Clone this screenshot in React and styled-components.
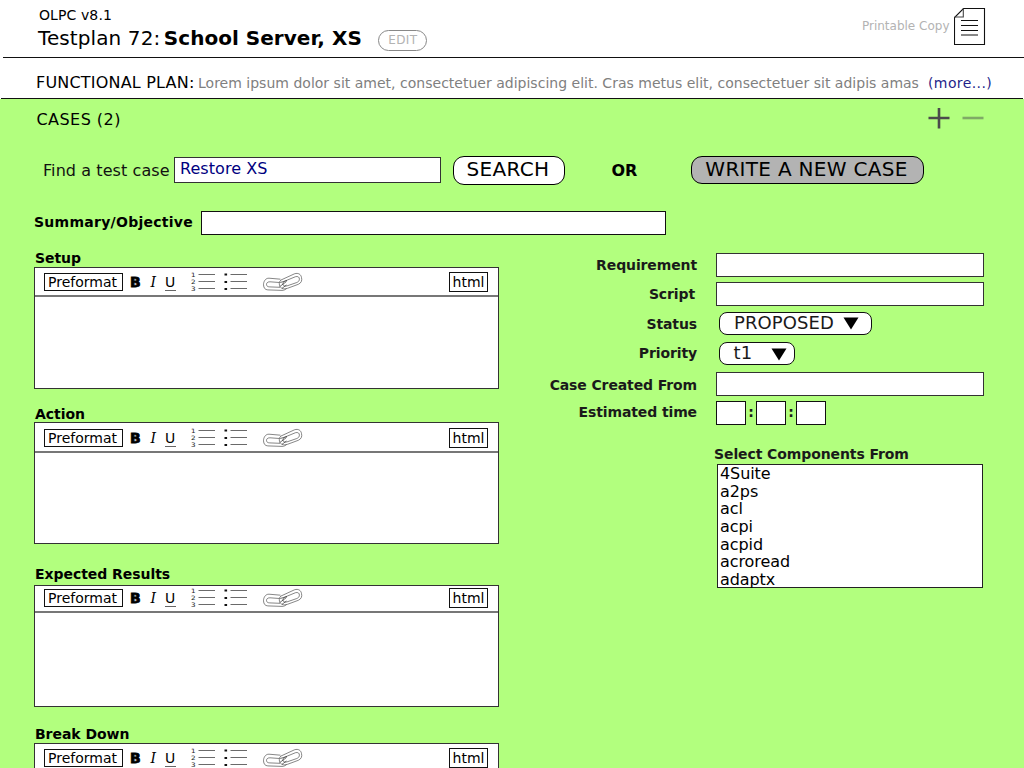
import React from "react";
import styled, { createGlobalStyle } from "styled-components";

const Global = createGlobalStyle`
  * { box-sizing: border-box; }
  html, body { margin: 0; padding: 0; background: #fff; }
  body { width: 1024px; height: 768px; overflow: hidden; }
  button, input { font: inherit; color: inherit; }
`;

const Page = styled.div`
  width: 1024px;
  height: 768px;
  overflow: hidden;
  display: flex;
  flex-direction: column;
  background: #fff;
  color: #000;
  font-family: "DejaVu Sans", Verdana, sans-serif;
  white-space: nowrap;
`;

const Header = styled.header`
  height: 58px;
  margin-left: 3px;
  border-bottom: 1px solid #111;
  display: flex;
  justify-content: space-between;
`;

const Titles = styled.div`
  padding: 6px 0 0 35px;
`;

const Version = styled.div`
  font-size: 14px;
  line-height: 18px;
  letter-spacing: 0.1px;
  padding-left: 1px;
`;

const TitleRow = styled.div`
  display: flex;
  align-items: center;
  height: 28px;
  font-size: 20px;
`;

const Title = styled.h1`
  margin: 0;
  font-size: 20px;
  line-height: 28px;
  font-weight: 400;
  letter-spacing: 0.1px;
`;

const TitleName = styled.b`
  margin-left: 3.5px;
  letter-spacing: 0.03px;
`;

const EditButton = styled.button`
  width: 49px;
  height: 21px;
  margin: 4px 0 0 16.5px;
  padding: 0;
  border: 1px solid #888;
  border-radius: 11px;
  background: #fff;
  color: #b3b3b3;
  font-size: 12px;
  letter-spacing: 0.35px;
  line-height: 19px;
`;

const PrintLink = styled.div`
  display: flex;
  gap: 4.5px;
  padding: 8px 38px 0 0;
  color: #b3b3b3;
  font-size: 12px;
  line-height: 36px;
`;

const PlanRow = styled.section`
  height: 41px;
  margin-left: 1px;
  margin-right: 1px;
  padding: 9px 0 0 35px;
  border-bottom: 1.5px solid #111;
  display: flex;
  align-items: center;
`;

const PlanLabel = styled.span`
  font-size: 16px;
  letter-spacing: 0.2px;
  line-height: 20px;
  width: 162px;
`;

const PlanText = styled.span`
  font-size: 14px;
  letter-spacing: 0.01px;
  color: #808080;
  width: 730px;
`;

const MoreLink = styled.span`
  font-size: 14px;
  letter-spacing: 0.4px;
  color: #1f1f8a;
`;

const Cases = styled.main`
  flex: 1;
  min-height: 0;
  background: #b2ff7e;
`;

const CasesHead = styled.div`
  display: flex;
  justify-content: space-between;
  height: 57px;
  padding: 9px 40px 0 36.5px;
`;

const CasesTitle = styled.h2`
  margin: 0;
  font-size: 16px;
  font-weight: 400;
  letter-spacing: 0.45px;
  line-height: 24px;
`;

const SearchRow = styled.div`
  display: flex;
  height: 55px;
  padding-left: 43px;
  font-size: 16px;
`;

const FindLabel = styled.label`
  width: 131px;
  line-height: 30px;
  letter-spacing: 0.08px;
  color: #111;
`;

const SearchInput = styled.input`
  width: 267px;
  height: 26px;
  margin-top: 1px;
  padding: 0 5px 3px;
  border: 1px solid #333;
  outline: none;
  border-radius: 0;
  background: #fff;
  color: #000080;
  letter-spacing: 0.05px;
`;

const BigButton = styled.button`
  width: ${(p) => p.$width}px;
  height: ${(p) => (p.$grey ? 28 : 29)}px;
  margin-left: ${(p) => p.$gap}px;
  padding: 0 2px ${(p) => (p.$grey ? 2 : 4)}px 0;
  border: 1.5px solid #000;
  border-radius: 11px;
  background: ${(p) => (p.$grey ? "#b3b3b3" : "#fff")};
  font-size: 20px;
  letter-spacing: ${(p) => (p.$grey ? 0.3 : 0.35)}px;
  line-height: 24px;
`;

const Or = styled.b`
  margin-left: 46.5px;
  width: 26.5px;
  line-height: 29px;
`;

const SummaryRow = styled.div`
  display: flex;
  height: 38px;
  padding-left: 34px;
`;

const BoldLabel = styled.div`
  font-size: 14px;
  font-weight: 700;
  letter-spacing: -0.1px;
  line-height: 18px;
`;

const SummaryLabel = styled(BoldLabel)`
  width: 167px;
  line-height: 22px;
  letter-spacing: 0.27px;
`;

const Field = styled.input`
  display: block;
  width: ${(p) => p.$width}px;
  height: 24px;
  padding: 0 4px;
  border: 1px solid ${(p) => p.$tone || "#333"};
  border-radius: 0;
  outline: none;
  background: #fff;
`;

const Columns = styled.div`
  display: flex;
`;

const EditorColumn = styled.div`
  width: 465px;
  margin-left: 34px;
`;

const EditorBlock = styled.section`
  height: ${(p) => p.$height}px;
`;

const EditorLabel = styled(BoldLabel)`
  height: ${(p) => p.$height}px;
  padding: ${(p) => p.$top}px 0 0 1px;
  letter-spacing: -0.05px;
`;

const EditorBox = styled.div`
  height: 122px;
  border: 1px solid #333;
  background: #fff;
`;

const Toolbar = styled.div`
  display: flex;
  align-items: flex-start;
  height: ${(p) => p.$height}px;
  padding: ${(p) => p.$top}px 10px 0 9px;
  border-bottom: 2px solid #777;
  font-size: 14px;
`;

const ToolButton = styled.button`
  width: ${(p) => p.$width}px;
  height: ${(p) => p.$height}px;
  margin: ${(p) => p.$margin || "0"};
  padding: 0 ${(p) => p.$shift}px 0 0;
  border: 1px solid #111;
  background: #fff;
  line-height: 16px;
  text-align: center;
`;

const Glyph = styled.span`
  width: ${(p) => p.$width}px;
  line-height: 18px;
`;

const BoldGlyph = styled(Glyph)`
  font-weight: 700;
  margin-left: 7px;
  -webkit-text-stroke: 0.8px #000;
`;

const ItalicGlyph = styled(Glyph)`
  font-family: "DejaVu Serif", serif;
  font-style: italic;
  margin-left: 7.5px;
`;

const UnderGlyph = styled(Glyph)`
  width: 11px;
  height: 18px;
  margin-left: 1px;
  border-bottom: 1px solid #666;
  text-align: center;
`;

const Tools = styled.svg`
  display: block;
  margin: -2px auto 0 15px;
  flex: none;
`;

const FormColumn = styled.div`
  margin: -2px 0 0 41px;
  display: grid;
  grid-template-columns: 157px 268px;
  column-gap: 19px;
  grid-template-rows: 30px 29px 30px 30px 29px 50px auto;
`;

const FormLabel = styled(BoldLabel)`
  color: #1a1a1a;
  text-align: right;
  letter-spacing: -0.12px;
  padding-top: ${(p) => p.$top}px;
  padding-right: ${(p) => p.$right || 0}px;
`;

const FormCell = styled.div`
  padding-top: ${(p) => p.$top}px;
`;

const PillSelect = styled.div`
  display: flex;
  justify-content: space-between;
  width: ${(p) => p.$width}px;
  height: 23px;
  margin: 6px 0 0 2.5px;
  padding: 0 ${(p) => p.$right}px 0 ${(p) => p.$left}px;
  border: 1.3px solid #111;
  border-radius: 8px;
  background: #fff;
  color: #1a1a1a;
  font-size: 18px;
  letter-spacing: 0.1px;
  line-height: 20px;
`;

const Arrow = styled.svg`
  margin-top: ${(p) => p.$top}px;
`;

const TimeRow = styled.div`
  display: flex;
  padding-top: 6px;
  font-size: 14px;
  font-weight: 700;
  line-height: 22px;
  color: #1a1a1a;
`;

const Colon = styled.span`
  width: 10px;
  text-align: center;
`;

const ComponentsPicker = styled.div`
  grid-column: 2;
`;

const PickerLabel = styled(BoldLabel)`
  margin-left: -2px;
  height: 19px;
  color: #1a1a1a;
`;

const List = styled.ul`
  width: 266px;
  height: 124px;
  margin: 0 0 0 1px;
  padding: 0.3px 0 0 2px;
  border: 1px solid #222;
  background: #fff;
  list-style: none;
  font-size: 16px;
  letter-spacing: -0.08px;
  line-height: 17.6px;
`;

function Editor({ label, height, labelHeight = 18, labelTop = 0, barHeight, top }) {
  return (
    <EditorBlock $height={height}>
      <EditorLabel $height={labelHeight} $top={labelTop}>{label}</EditorLabel>
      <EditorBox>
        <Toolbar $height={barHeight} $top={top}>
          <ToolButton $width={79} $height={18} $shift={2}>Preformat</ToolButton>
          <BoldGlyph $width={13}>B</BoldGlyph>
          <ItalicGlyph $width={13}>I</ItalicGlyph>
          <UnderGlyph>U</UnderGlyph>
          <Tools width="113" height="22" viewBox="0 0 113 22" fill="none" stroke="#444" strokeWidth="0.8">
            <g fill="#222" stroke="none" fontFamily="DejaVu Sans" fontSize="6">
              <text x="0" y="5.5" textLength="4.6" lengthAdjust="spacingAndGlyphs">1</text>
              <text x="0" y="12.7" textLength="4.6" lengthAdjust="spacingAndGlyphs">2</text>
              <text x="0" y="19.8" textLength="4.6" lengthAdjust="spacingAndGlyphs">3</text>
            </g>
            <path d="M7.5 3.5H24M7.5 10.5H24M7.5 17.5H24M39.5 3.5H56M39.5 10.5H56M39.5 17.5H56" />
            <path d="M33.500 3.500h2.600M33.500 11h2.600M33.500 18h2.600" stroke="#111" strokeWidth="1.8" />
            <g strokeWidth="0.65">
              <path d="M89.500 8.200L78 7.200C74.500 7 72.500 10.500 72.500 13.800C72.700 17 74 18.700 76.800 18.900L91 19.400C93 19.400 94.500 18.500 95.500 17.600" />
              <path d="M88.500 11.500L79 10.800C76.500 10.700 75.300 12.200 75.500 13.700C75.700 15.300 77 15.800 78.800 15.900L89 16.300" />
              <path d="M90 9L103.500 2.800C107.500 1.500 110 3.600 110.500 6.500C111.300 9.500 110.300 12 107.300 13.300L96.500 17.300C92.500 18.600 89.500 17.500 88.500 14.500C88 12 88.400 10.200 90 9Z" />
              <path d="M94.500 9.800L104.500 5.700C107 5 108.500 6.200 108.400 8.200C108.300 9.900 107.300 10.900 105.800 11.500L96 14.900C93.500 15.500 92 14.700 91.800 13C91.800 11.500 93 10.500 94.500 9.800Z" />
              <path d="M89.200 11.500L96 9.500M88.800 15.500L95.500 10.500M91 17.300L95.500 14" stroke="#222" />
            </g>
          </Tools>
          <ToolButton $width={39} $height={20} $shift={0} $margin="-1px 0 0">html</ToolButton>
        </Toolbar>
      </EditorBox>
    </EditorBlock>
  );
}

const components = ["4Suite", "a2ps", "acl", "acpi", "acpid", "acroread", "adaptx"];

export default function App() {
  return (
    <Page>
      <Global />
      <Header>
        <Titles>
          <Version>OLPC v8.1</Version>
          <TitleRow>
            <Title>Testplan 72:<TitleName>School Server, XS</TitleName></Title>
            <EditButton>EDIT</EditButton>
          </TitleRow>
        </Titles>
        <PrintLink>
          <span>Printable Copy</span>
          <svg width="32" height="38" viewBox="0 0 32 38" fill="none" stroke="#111" strokeWidth="1.1">
            <path d="M9.500 0.500H30.500V36.500H0.500V9.500Z" fill="#fff" />
            <path d="M9.300 0.500V9H0.500" stroke="#444" />
            <path d="M7 12.500H24M7 17.500H24M7 22.500H24M7 27H24" />
          </svg>
        </PrintLink>
      </Header>
      <PlanRow>
        <PlanLabel>FUNCTIONAL PLAN:</PlanLabel>
        <PlanText>
          Lorem ipsum dolor sit amet, consectetuer adipiscing elit. Cras metus elit, consectetuer sit adipis amas
        </PlanText>
        <MoreLink>(more...)</MoreLink>
      </PlanRow>
      <Cases>
        <CasesHead>
          <CasesTitle>CASES (2)</CasesTitle>
          <svg width="56" height="24" viewBox="0 0 56 24" fill="none" strokeWidth="2.6">
            <path d="M0.500 10H21.500M11 -0.500V20.500" stroke="#4b4b4b" />
            <path d="M34.500 10H55.500" stroke="#7faa66" />
          </svg>
        </CasesHead>
        <SearchRow>
          <FindLabel htmlFor="find">Find a test case</FindLabel>
          <SearchInput id="find" defaultValue="Restore XS" />
          <BigButton $width={112} $gap={12}>SEARCH</BigButton>
          <Or>OR</Or>
          <BigButton $width={233} $gap={53} $grey>WRITE A NEW CASE</BigButton>
        </SearchRow>
        <SummaryRow>
          <SummaryLabel>Summary/Objective</SummaryLabel>
          <Field $width={465} $tone="#111" />
        </SummaryRow>
        <Columns>
          <EditorColumn>
            <Editor label="Setup" height={155} barHeight={29} top={5} />
            <Editor label="Action" height={160} labelTop={1} barHeight={30} top={6} />
            <Editor label="Expected Results" height={160} labelTop={1} labelHeight={21} barHeight={27} top={3} />
            <Editor label="Break Down" height={155} labelTop={1} labelHeight={19} barHeight={29} top={5} />
          </EditorColumn>
          <FormColumn>
            <FormLabel $top={9}>Requirement</FormLabel>
            <FormCell $top={6}><Field $width={268} /></FormCell>
            <FormLabel $top={8} $right={2}>Script</FormLabel>
            <FormCell $top={5}><Field $width={268} /></FormCell>
            <FormLabel $top={9}>Status</FormLabel>
            <PillSelect $width={153} $left={14.5} $right={12}>
              PROPOSED
              <Arrow $top={4} width="16" height="13"><path d="M0.500 0.500H15.500L8 12.500Z" fill="#000" /></Arrow>
            </PillSelect>
            <FormLabel $top={8}>Priority</FormLabel>
            <PillSelect $width={76} $left={14} $right={7}>
              t1
              <Arrow $top={5} width="16" height="13"><path d="M0.500 0.500H15.500L8 12.500Z" fill="#000" /></Arrow>
            </PillSelect>
            <FormLabel $top={10}>Case Created From</FormLabel>
            <FormCell $top={6}><Field $width={268} /></FormCell>
            <FormLabel $top={8}>Estimated time</FormLabel>
            <TimeRow>
              <Field $width={30} $tone="#111" />
              <Colon>:</Colon>
              <Field $width={30} $tone="#111" />
              <Colon>:</Colon>
              <Field $width={30} $tone="#111" />
            </TimeRow>
            <ComponentsPicker>
              <PickerLabel>Select Components From</PickerLabel>
              <List>
                {components.map((name) => <li key={name}>{name}</li>)}
              </List>
            </ComponentsPicker>
          </FormColumn>
        </Columns>
      </Cases>
    </Page>
  );
}
